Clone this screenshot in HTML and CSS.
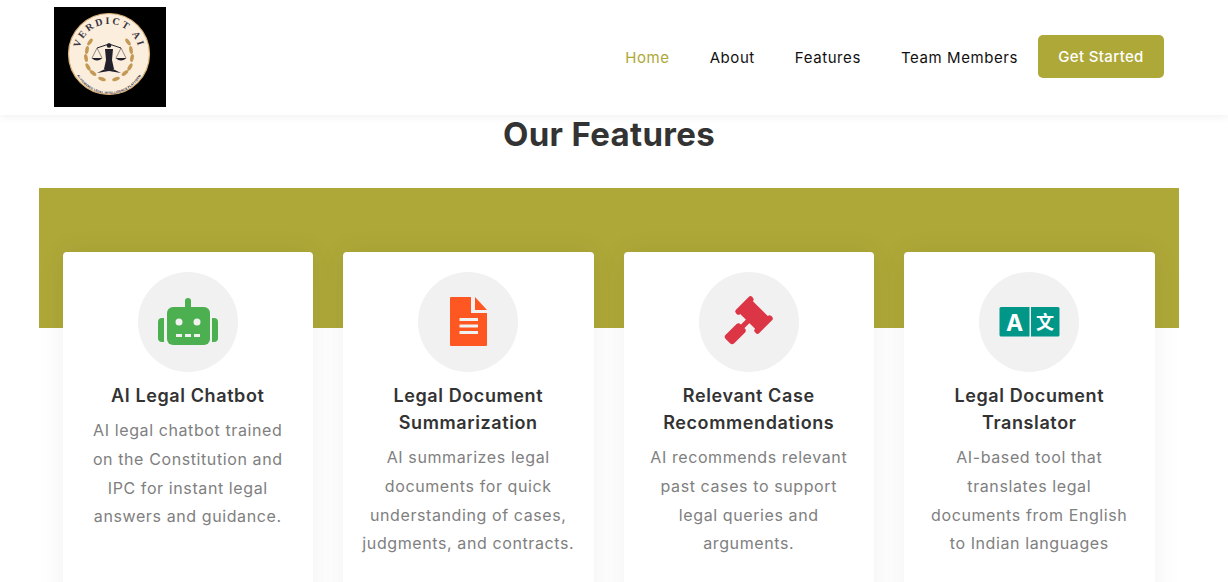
FILE: index.html
```html
<!DOCTYPE html>
<html lang="en">
<head>
<meta charset="utf-8">
<title>Verdict AI</title>
<link rel="stylesheet" href="styles.css">
</head>
<body>
<header class="site-header">
  <a class="logo" href="#">
    <svg class="logo-svg" viewBox="0 0 112 100" aria-label="Verdict AI logo">
      <rect width="112" height="100" fill="#000"/>
      <circle cx="55" cy="47" r="40.5" fill="#fbeedd" stroke="#d9b078" stroke-width="1.2"/>
      <defs>
        <path id="arcTop" d="M25 47 A30 30 0 0 1 85 47"/>
        <path id="arcBottom" d="M18 50 A37 37 0 0 0 92 50"/>
      </defs>
      <text class="logo-title"><textPath href="#arcTop" startOffset="50%" text-anchor="middle">VERDICT AI</textPath></text>
      <text class="logo-sub"><textPath href="#arcBottom" startOffset="50%" text-anchor="middle">AI-POWERED LEGAL INTELLIGENCE PLATFORM</textPath></text>
      <g fill="#c39a55">
        <ellipse cx="36" cy="35" rx="1.8" ry="4" transform="rotate(35 36 35)"/>
        <ellipse cx="33" cy="43" rx="1.8" ry="4" transform="rotate(10 33 43)"/>
        <ellipse cx="32" cy="51" rx="1.8" ry="4" transform="rotate(-10 32 51)"/>
        <ellipse cx="34" cy="60" rx="1.8" ry="4" transform="rotate(-30 34 60)"/>
        <ellipse cx="39" cy="66" rx="1.8" ry="4" transform="rotate(-50 39 66)"/>
        <ellipse cx="48" cy="72" rx="1.8" ry="4" transform="rotate(-70 48 72)"/>
        <ellipse cx="74" cy="35" rx="1.8" ry="4" transform="rotate(-35 74 35)"/>
        <ellipse cx="77" cy="43" rx="1.8" ry="4" transform="rotate(-10 77 43)"/>
        <ellipse cx="78" cy="51" rx="1.8" ry="4" transform="rotate(10 78 51)"/>
        <ellipse cx="76" cy="60" rx="1.8" ry="4" transform="rotate(30 76 60)"/>
        <ellipse cx="71" cy="66" rx="1.8" ry="4" transform="rotate(50 71 66)"/>
        <ellipse cx="62" cy="72" rx="1.8" ry="4" transform="rotate(70 62 72)"/>
      </g>
      <g fill="#22202a" stroke="#22202a">
        <path d="M43 41 L55 37 L67 41" fill="none" stroke-width="1"/>
        <path d="M43 41 L38 51 M43 41 L48 51 M67 41 L62 51 M67 41 L72 51" fill="none" stroke-width=".5"/>
        <path d="M37.5 51 H48.5 Q43 56 37.5 51Z M61.5 51 H72.5 Q67 56 61.5 51Z" stroke="none"/>
        <circle cx="55" cy="38.5" r="2.3" stroke="none"/>
        <path d="M51 42 H59 L58 53 L60 62 H50 L52 53Z" stroke="none"/>
        <path d="M43 66 L55 60 L67 66 L55 64Z" stroke="none"/>
      </g>
    </svg>
  </a>
  <nav class="main-nav">
    <a class="nav-link is-active" href="#">Home</a>
    <a class="nav-link" href="#">About</a>
    <a class="nav-link" href="#">Features</a>
    <a class="nav-link" href="#">Team Members</a>
    <a class="cta" href="#">Get Started</a>
  </nav>
</header>

<main class="features">
  <h1 class="features-title">Our Features</h1>
  <div class="band">
    <article class="card">
      <div class="icon-circle">
        <svg class="icon" viewBox="0 0 100 100" fill="#4caf50">
          <rect x="47" y="26" width="6" height="12" rx="3"/>
          <rect x="29" y="35" width="43" height="38" rx="6"/>
          <path d="M26 46 V70 H24 Q20 70 20 66 V50 Q20 46 24 46Z"/>
          <path d="M74 46 V70 H76 Q80 70 80 66 V50 Q80 46 76 46Z"/>
          <g fill="#f1f1f1">
            <circle cx="41" cy="50" r="3.5"/><circle cx="59" cy="50" r="3.5"/>
            <rect x="38" y="62" width="6" height="3"/><rect x="47" y="62" width="6" height="3"/><rect x="56" y="62" width="6" height="3"/>
          </g>
        </svg>
      </div>
      <h2 class="card-title">AI Legal Chatbot</h2>
      <p class="card-text">AI legal chatbot trained<br>on the Constitution and<br>IPC for instant legal<br>answers and guidance.</p>
    </article>
    <article class="card">
      <div class="icon-circle">
        <svg class="icon" viewBox="0 0 100 100" fill="#ff5722">
          <path d="M33 25 H53 V41 H69 V73 Q69 74 68 74 H33 Q32 74 32 73 V26 Q32 25 33 25Z"/>
          <path d="M57 25 L69 38 H57Z"/>
          <g fill="#f1f1f1">
            <rect x="41.5" y="46" width="18.5" height="3"/><rect x="41.5" y="52.5" width="18.5" height="3"/><rect x="41.5" y="59" width="18.5" height="3"/>
          </g>
        </svg>
      </div>
      <h2 class="card-title">Legal Document<br>Summarization</h2>
      <p class="card-text">AI summarizes legal<br>documents for quick<br>understanding of cases,<br>judgments, and contracts.</p>
    </article>
    <article class="card">
      <div class="icon-circle">
        <svg class="icon" viewBox="0 0 100 100" fill="#dc3545">
          <g transform="translate(55 43) rotate(45)">
            <rect x="-13" y="-9" width="26" height="18"/>
            <rect x="-16.5" y="-11.5" width="6" height="23" rx="2.5"/>
            <rect x="10.5" y="-11.5" width="6" height="23" rx="2.5"/>
            <rect x="-2.5" y="8" width="5" height="9"/>
            <rect x="-6" y="16" width="12" height="21" rx="3"/>
          </g>
        </svg>
      </div>
      <h2 class="card-title">Relevant Case<br>Recommendations</h2>
      <p class="card-text">AI recommends relevant<br>past cases to support<br>legal queries and<br>arguments.</p>
    </article>
    <article class="card">
      <div class="icon-circle">
        <svg class="icon" viewBox="0 0 100 100" fill="#009688">
          <path d="M22 35 H50.5 V64.5 H22 Q20.5 64.5 20.5 63 V36.5 Q20.5 35 22 35Z"/>
          <path d="M52 35 H79 Q80.5 35 80.5 36.5 V63 Q80.5 64.5 79 64.5 H52Z"/>
          <text class="glyph-a" x="35.5" y="58.5" text-anchor="middle">A</text>
          <text class="glyph-cjk" x="66" y="56.5" text-anchor="middle">文</text>
        </svg>
      </div>
      <h2 class="card-title">Legal Document<br>Translator</h2>
      <p class="card-text">AI-based tool that<br>translates legal<br>documents from English<br>to Indian languages</p>
    </article>
  </div>
</main>
</body>
</html>
```
FILE: styles.css
```css
* { box-sizing: border-box; }
html, body { margin: 0; height: 100%; overflow: hidden; }
body {
  background: #fff;
  color: #333;
  font-family: Inter, "Noto Sans", sans-serif;
}
a { text-decoration: none; }

.site-header {
  position: relative;
  z-index: 2;
  height: 115px;
  padding: 7px 64px 0 54px;
  display: flex;
  justify-content: space-between;
  background: #fff;
  box-shadow: 0 2px 8px rgba(0, 0, 0, .06);
}
.logo { display: block; width: 112px; height: 100px; }
.logo-svg { display: block; width: 112px; height: 100px; }
.logo-title { font: 700 10px "Liberation Serif", serif; letter-spacing: 2.3px; fill: #3a3340; }
.logo-sub { font: 700 3px Inter, sans-serif; letter-spacing: .2px; fill: #3a3340; }

.main-nav { display: flex; align-items: center; height: 100px; }
.nav-link {
  color: #111;
  font-size: 15px;
  letter-spacing: .58px;
  margin-right: 40px;
}
.nav-link:nth-child(4) { margin-right: 20px; }
.is-active { color: #aea838; }
.cta {
  width: 126px;
  height: 43px;
  margin-bottom: 1px;
  display: flex;
  align-items: center;
  justify-content: center;
  border-radius: 5px;
  background: #aea838;
  color: #fff;
  font-size: 15px;
  font-weight: 500;
  letter-spacing: .35px;
}

.features { width: 1140px; margin-left: 39px; }
.features-title {
  margin: 1px 0 36px;
  text-align: center;
  font-size: 33px;
  font-weight: 700;
  line-height: 36px;
  letter-spacing: .33px;
  color: #333;
}
.band {
  display: grid;
  grid-template-columns: repeat(4, 1fr);
  gap: 30px;
  padding: 64px 24.25px 0 23.75px;
  background: linear-gradient(#aea838 140px, transparent 140px);
}
.card {
  height: 420px;
  padding: 20px 18.5px 0 18px;
  text-align: center;
  background: #fff;
  border-radius: 4px;
  box-shadow: 0 0 30px rgba(0, 0, 0, .06);
}
.icon-circle {
  width: 100px;
  height: 100px;
  margin: 0 auto 10px;
  border-radius: 50%;
  background: #f1f1f1;
}
.icon { display: block; width: 100px; height: 100px; }
.glyph-a { font: 700 23px Inter, sans-serif; fill: #fff; }
.glyph-cjk { font: 700 18px "Noto Sans CJK SC", sans-serif; fill: #fff; }
.card-title {
  margin: 0 0 7px;
  font-size: 18px;
  font-weight: 600;
  line-height: 27px;
  letter-spacing: .6px;
  color: #333;
}
.card-text {
  margin: 0;
  font-size: 16px;
  line-height: 28.8px;
  letter-spacing: .6px;
  color: #808080;
}
```
